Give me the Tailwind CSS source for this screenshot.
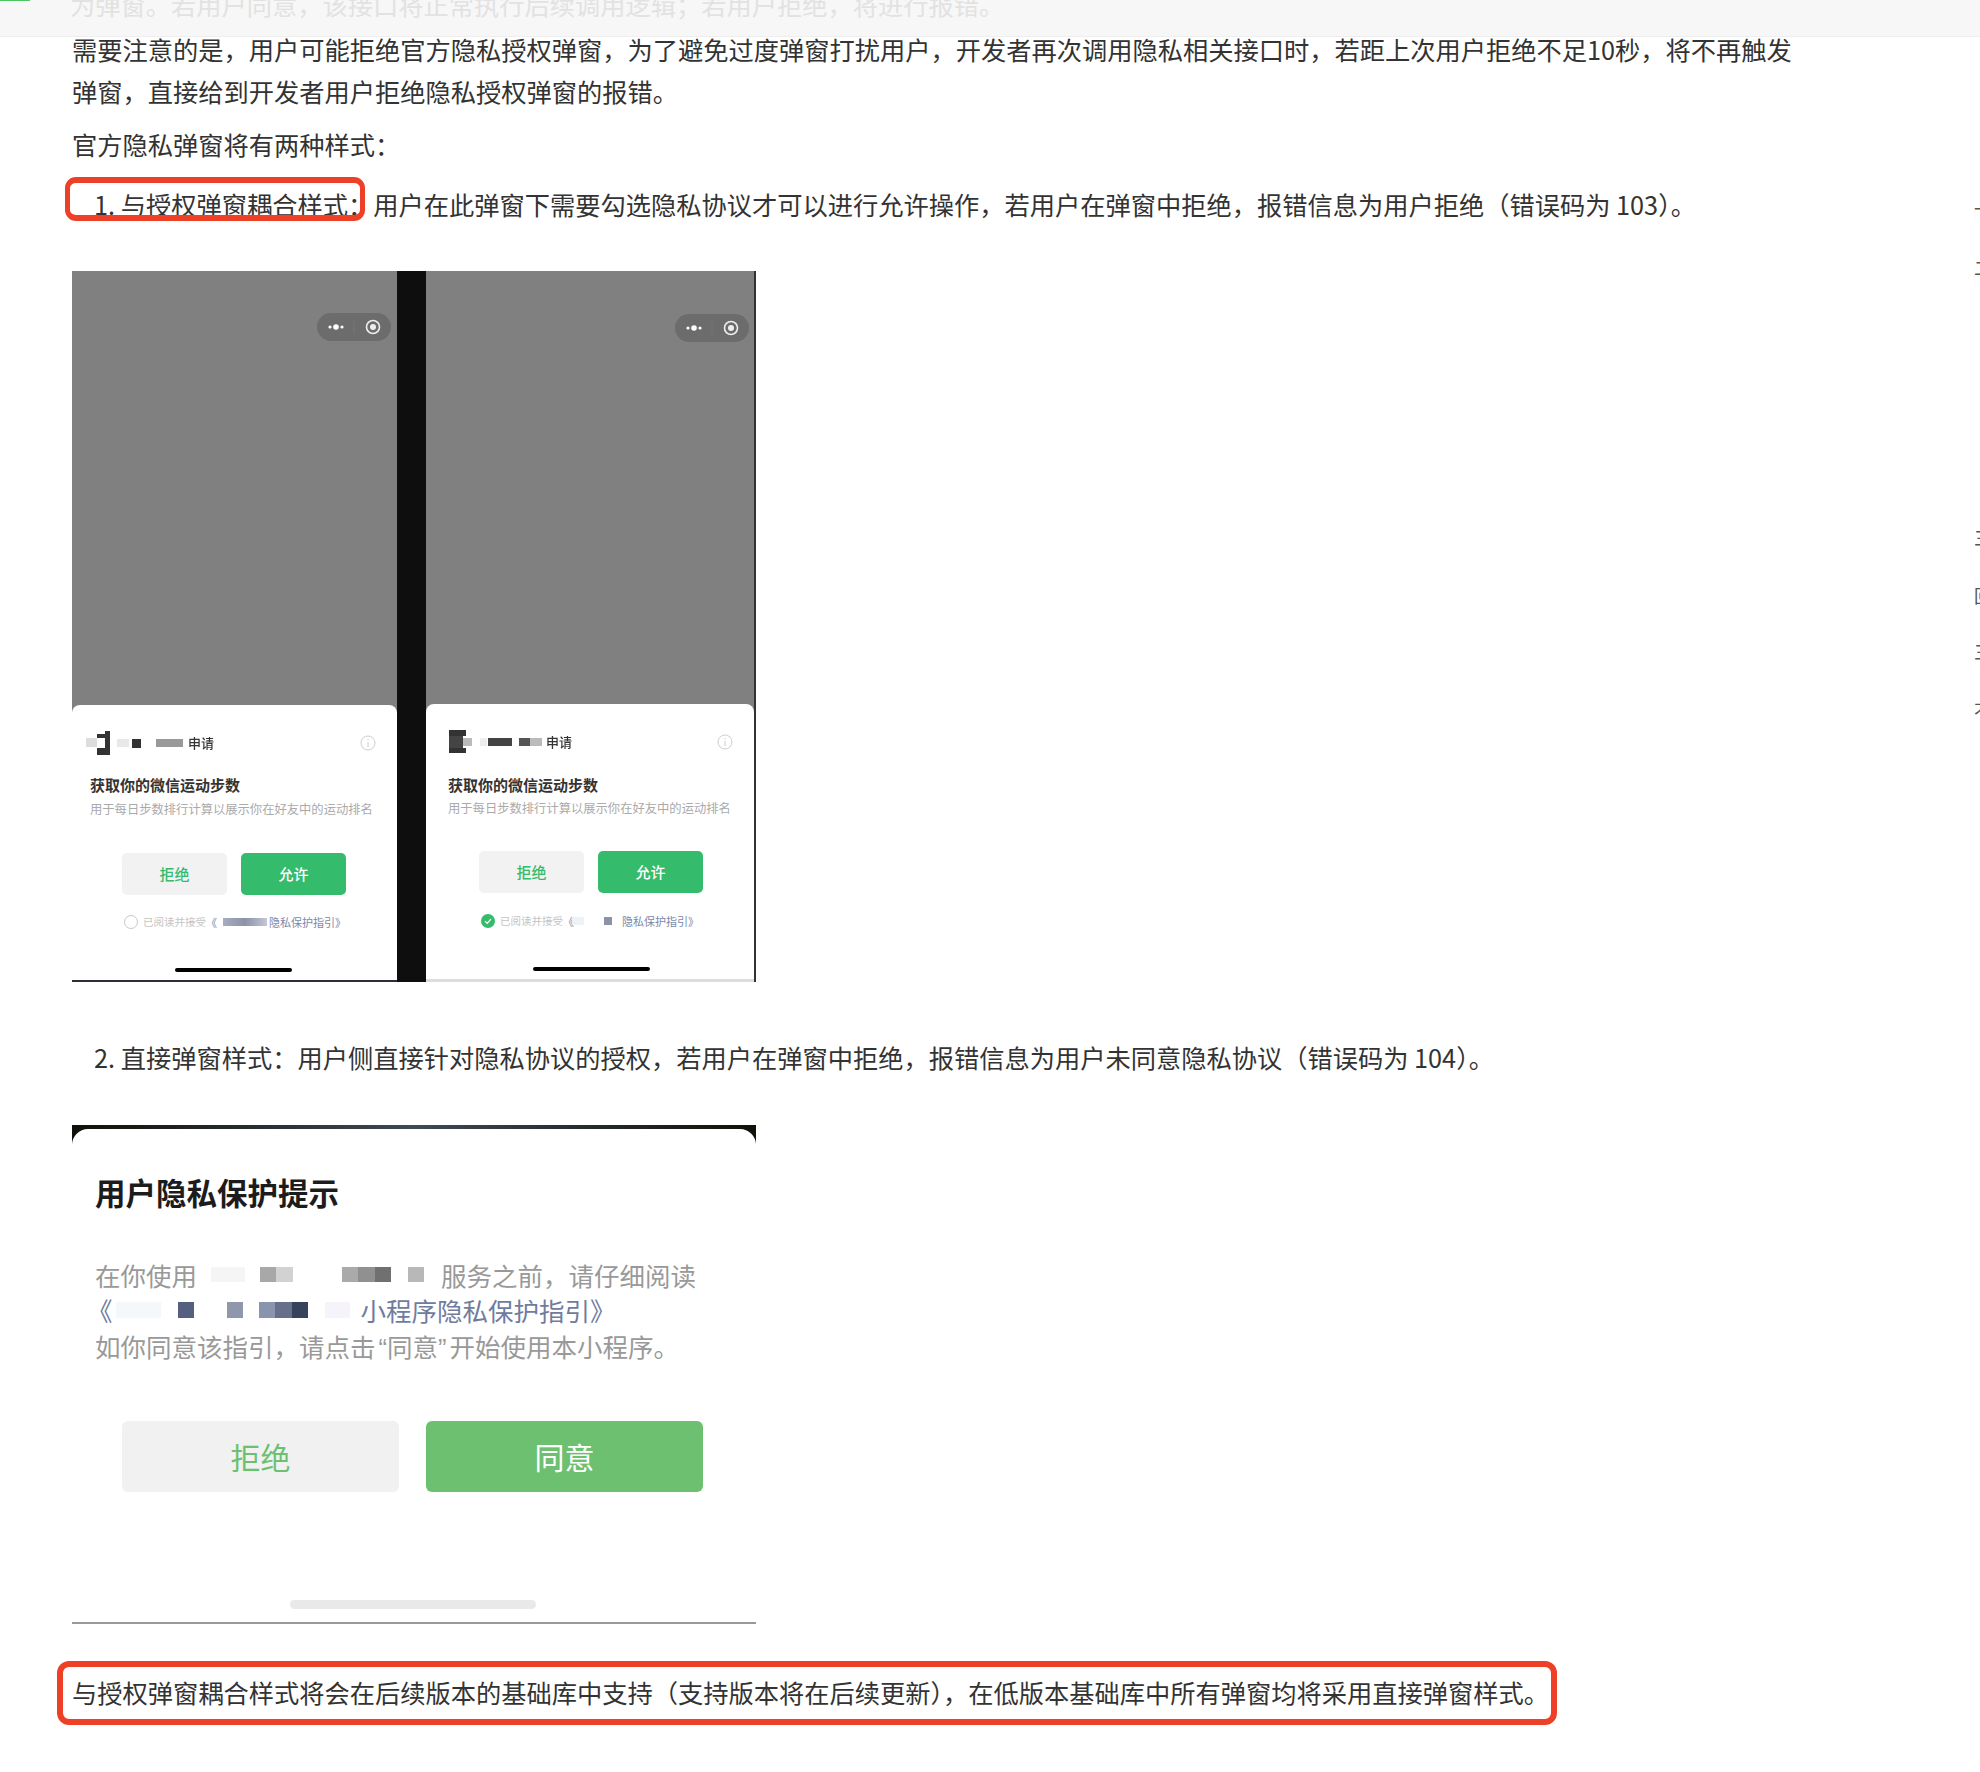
<!DOCTYPE html>
<html lang="zh-CN">
<head>
    <meta charset="UTF-8">
    <title>隐私授权弹窗</title>
    <script src="https://cdn.jsdelivr.net/npm/@tailwindcss/browser@4"></script>
</head>
<body class="bg-white">
<div class="relative flex w-[1980px] h-[1772px] overflow-hidden bg-white text-[#333] font-['Noto_Sans_CJK_SC','Noto_Sans',sans-serif]">

    <!-- 顶部吸顶栏 -->
    <header class="absolute top-0 left-0 right-0 h-[37px] overflow-hidden bg-[#f7f7f7] border-b border-[#eeeeee] z-10">
        <div class="absolute top-0 left-0 w-[30px] h-[1px] bg-[#4cc764]"></div>
        <p class="pl-[70px] -mt-[16px] text-[25.25px] leading-[41px] text-[#e2e2e2] whitespace-nowrap">为弹窗。若用户同意，该接口将正常执行后续调用逻辑；若用户拒绝，将进行报错。</p>
    </header>

    <main class="w-[1974px] shrink-0 pl-[72px] pt-[29px] text-[25.25px] leading-[41.6px]">
        <p class="w-[1730px]">需要注意的是，用户可能拒绝官方隐私授权弹窗，为了避免过度弹窗打扰用户，开发者再次调用隐私相关接口时，若距上次用户拒绝不足10秒，将不再触发弹窗，直接给到开发者用户拒绝隐私授权弹窗的报错。</p>
        <p class="mt-[12px]">官方隐私弹窗将有两种样式：</p>

        <div class="relative mt-[18px] pl-[22px] whitespace-nowrap">
            <div class="absolute -left-[7px] -top-[7px] w-[300px] h-[44px] border-x-[5px] border-y-[6px] border-[#ee4027] rounded-[11px]"></div>
            1. 与授权弹窗耦合样式：用户在此弹窗下需要勾选隐私协议才可以进行允许操作，若用户在弹窗中拒绝，报错信息为用户拒绝（错误码为 103）。
        </div>

        <!-- 图一：与授权弹窗耦合 -->
        <div class="mt-[46px] flex w-[684px] h-[711px] blur-[0.5px]">
            <div class="w-[325px] flex flex-col bg-[#808080]">
                <div class="h-[434px] flex justify-end pt-[42px] pr-[6px]">
                    <div class="w-[74px] h-[28px] rounded-full bg-[#6c6c6c] flex items-center">
                        <svg width="74" height="28" viewBox="0 0 74 28"><circle cx="13" cy="14" r="1.6" fill="#fff"/><circle cx="19" cy="14" r="2.8" fill="#fff"/><circle cx="25" cy="14" r="1.6" fill="#fff"/><path d="M37 7v14" stroke="#777"/><circle cx="56" cy="14" r="6.5" fill="none" stroke="#eee" stroke-width="1.6"/><circle cx="56" cy="14" r="3" fill="#eee"/></svg>
                    </div>
                </div>
                <div class="h-[275px] bg-white rounded-t-[8px] pl-[18px] flex flex-col">
                    <div class="mt-[26px] h-[24px] flex items-center relative">
                        <svg width="112" height="24" viewBox="0 0 112 24" class="-ml-[4px]"><rect x="0" y="7" width="11" height="9" fill="#ddd"/><rect x="11" y="7" width="8" height="10" fill="#fff"/><rect x="11" y="3" width="13" height="4" fill="#333"/><rect x="19" y="0" width="5" height="24" fill="#333"/><rect x="11" y="17" width="13" height="7" fill="#333"/><rect x="31" y="8" width="12" height="8" fill="#e8e8e8"/><rect x="46" y="8" width="9" height="9" fill="#333"/><rect x="70" y="8" width="27" height="8" fill="#999"/></svg>
                        <span class="-ml-[10px] text-[13px] leading-[24px] font-medium text-[#333]">申请</span>
                        <svg width="16" height="16" viewBox="0 0 16 16" class="absolute left-[270px] top-[4px]"><circle cx="8" cy="8" r="7" fill="none" stroke="#ccc"/><path d="M8 7v5M8 4v1.5" stroke="#ccc"/></svg>
                    </div>
                    <h3 class="mt-[20px] text-[15px] leading-[20px] font-bold text-[#333]">获取你的微信运动步数</h3>
                    <p class="mt-[5px] text-[12.3px] leading-[18px] text-[#aaaaaa] whitespace-nowrap">用于每日步数排行计算以展示你在好友中的运动排名</p>
                    <div class="mt-[35px] ml-[32px] flex gap-[14px]">
                        <div class="w-[105px] h-[42px] rounded-[5px] bg-[#f2f2f2] text-[#35bb6c] text-[15px] leading-[42px] font-medium text-center">拒绝</div>
                        <div class="w-[105px] h-[42px] rounded-[5px] bg-[#35bb6c] text-white text-[15px] leading-[42px] font-medium text-center">允许</div>
                    </div>
                    <div class="mt-[19px] ml-[34px] h-[16px] flex items-center text-[10.5px] leading-[16px] whitespace-nowrap">
                        <span class="w-[14px] h-[14px] rounded-full border border-[#c8c8c8]"></span>
                        <span class="ml-[5px] text-[#c4c4c4]">已阅读并接受</span>
                        <span class="text-[#7b88a8] text-[11px]">《</span>
                        <span class="ml-[6px] w-[44px] h-[8px] bg-gradient-to-r from-[#a8adc0] via-[#8c93a8] to-[#c4c8d6]"></span>
                        <span class="ml-[2px] text-[#7b88a8] text-[11px]">隐私保护指引》</span>
                    </div>
                    <div class="mt-[38px] ml-[85px] w-[117px] h-[4px] rounded-full bg-black"></div>
                </div>
                <div class="h-[2px] bg-[#2a2f38]"></div>
            </div>

            <div class="w-[29px] bg-[#0e0e0e]"></div>

            <div class="w-[330px] flex flex-col bg-[#808080] border-r-2 border-[#333]">
                <div class="h-[433px] flex justify-end pt-[43px] pr-[5px]">
                    <div class="w-[74px] h-[28px] rounded-full bg-[#6c6c6c] flex items-center">
                        <svg width="74" height="28" viewBox="0 0 74 28"><circle cx="13" cy="14" r="1.6" fill="#fff"/><circle cx="19" cy="14" r="2.8" fill="#fff"/><circle cx="25" cy="14" r="1.6" fill="#fff"/><path d="M37 7v14" stroke="#777"/><circle cx="56" cy="14" r="6.5" fill="none" stroke="#eee" stroke-width="1.6"/><circle cx="56" cy="14" r="3" fill="#eee"/></svg>
                    </div>
                </div>
                <div class="h-[275px] bg-white rounded-t-[8px] pl-[22px] flex flex-col">
                    <div class="mt-[26px] h-[24px] flex items-center relative">
                        <svg width="98" height="24" viewBox="0 0 98 24"><rect x="1" y="0" width="17" height="6" fill="#333"/><rect x="1" y="6" width="14" height="12" fill="#444"/><rect x="15" y="8" width="9" height="8" fill="#bbb"/><rect x="1" y="18" width="17" height="5" fill="#333"/><rect x="32" y="8" width="7" height="8" fill="#eee"/><rect x="40" y="8" width="24" height="8" fill="#444"/><rect x="71" y="8" width="11" height="8" fill="#555"/><rect x="82" y="8" width="12" height="8" fill="#bbb"/></svg>
                        <span class="text-[13px] leading-[24px] font-medium text-[#333]">申请</span>
                        <svg width="16" height="16" viewBox="0 0 16 16" class="absolute left-[269px] top-[4px]"><circle cx="8" cy="8" r="7" fill="none" stroke="#ccc"/><path d="M8 7v5M8 4v1.5" stroke="#ccc"/></svg>
                    </div>
                    <h3 class="mt-[21px] text-[15px] leading-[20px] font-bold text-[#333]">获取你的微信运动步数</h3>
                    <p class="mt-[4px] text-[12.3px] leading-[18px] text-[#aaaaaa] whitespace-nowrap">用于每日步数排行计算以展示你在好友中的运动排名</p>
                    <div class="mt-[34px] ml-[31px] flex gap-[14px]">
                        <div class="w-[105px] h-[42px] rounded-[5px] bg-[#f2f2f2] text-[#35bb6c] text-[15px] leading-[42px] font-medium text-center">拒绝</div>
                        <div class="w-[105px] h-[42px] rounded-[5px] bg-[#35bb6c] text-white text-[15px] leading-[42px] font-medium text-center">允许</div>
                    </div>
                    <div class="mt-[20px] ml-[33px] h-[16px] flex items-center text-[10.5px] leading-[16px] whitespace-nowrap">
                        <svg width="14" height="14" viewBox="0 0 14 14"><circle cx="7" cy="7" r="7" fill="#35bb6c"/><path d="M4 7.2l2.2 2.2L10 5" fill="none" stroke="#fff" stroke-width="1.2"/></svg>
                        <span class="ml-[5px] text-[#c4c4c4]">已阅读并接受</span>
                        <span class="text-[#7b88a8] text-[11px]">《</span>
                        <span class="-ml-[2px] w-[12px] h-[8px] bg-[#eef1f6]"></span>
                        <span class="ml-[20px] w-[8px] h-[8px] bg-[#8c93a8]"></span>
                        <span class="ml-[10px] text-[#7b88a8] text-[11px]">隐私保护指引》</span>
                    </div>
                    <div class="mt-[38px] ml-[85px] w-[117px] h-[4px] rounded-full bg-black"></div>
                </div>
                <div class="h-[3px] bg-[#dddddd]"></div>
            </div>
        </div>

        <div class="mt-[55px] pl-[22px] whitespace-nowrap">2. 直接弹窗样式：用户侧直接针对隐私协议的授权，若用户在弹窗中拒绝，报错信息为用户未同意隐私协议（错误码为 104）。</div>

        <!-- 图二：直接弹窗 -->
        <div class="mt-[46px] w-[684px] h-[500px] flex flex-col bg-gradient-to-r from-[#11110a] via-[#3f4a55] to-[#11110a]">
            <div class="mt-[4px] h-[496px] bg-white rounded-t-[16px] flex flex-col">
                <h2 class="mt-[43px] pl-[23px] text-[30.5px] leading-[40px] font-bold text-[#1c1c1c]">用户隐私保护提示</h2>
                <div class="mt-[45px] pl-[23px] text-[25.5px] leading-[35.5px] text-[#999999]">
                    <div class="flex items-center h-[35.5px] whitespace-nowrap">
                        <span>在你使用</span>
                        <span class="ml-[14px] w-[34px] h-[15px] bg-[#f5f5f5]"></span>
                        <span class="ml-[15px] w-[16px] h-[15px] bg-[#a8a8a8]"></span>
                        <span class="w-[17px] h-[15px] bg-[#d2d2d2]"></span>
                        <span class="ml-[49px] w-[16px] h-[15px] bg-[#aaaaaa]"></span>
                        <span class="w-[17px] h-[15px] bg-[#909090]"></span>
                        <span class="w-[16px] h-[15px] bg-[#707070]"></span>
                        <span class="ml-[17px] w-[16px] h-[15px] bg-[#b8b8b8]"></span>
                        <span class="ml-[17px]">服务之前，请仔细阅读</span>
                    </div>
                    <div class="flex items-center h-[35.5px] whitespace-nowrap text-[#6f7c9d]">
                        <span class="-ml-[8px] w-[25.5px]">《</span>
                        <span class="ml-[3px] w-[45px] h-[16px] bg-[#f5f8fb]"></span>
                        <span class="ml-[17px] w-[16px] h-[16px] bg-[#556080]"></span>
                        <span class="ml-[33px] w-[16px] h-[16px] bg-[#9097ad]"></span>
                        <span class="ml-[16px] w-[16px] h-[16px] bg-[#8a94ad]"></span>
                        <span class="w-[17px] h-[16px] bg-[#67708a]"></span>
                        <span class="w-[16px] h-[16px] bg-[#36435a]"></span>
                        <span class="ml-[17px] w-[25px] h-[16px] bg-[#f6f3fb]"></span>
                        <span class="ml-[11px]">小程序隐私保护指引》</span>
                    </div>
                    <div class="h-[35.5px] whitespace-nowrap">如你同意该指引，请点击<span class="ml-[3px] font-['Liberation_Sans']">“</span>同意<span class="mr-[3px] font-['Liberation_Sans']">”</span>开始使用本小程序。</div>
                </div>
                <div class="mt-[58px] ml-[50px] flex gap-[27px]">
                    <div class="w-[277px] h-[71px] rounded-[6px] bg-[#f1f1f1] text-[#6cc070] text-[30px] leading-[71px] text-center">拒绝</div>
                    <div class="w-[277px] h-[71px] rounded-[6px] bg-[#6cc070] text-white text-[30px] leading-[71px] text-center">同意</div>
                </div>
                <div class="mt-[108px] ml-[218px] w-[246px] h-[9px] rounded-full bg-[#e9e9e9]"></div>
                <div class="mt-[13px] h-[2px] bg-[#999999]"></div>
            </div>
        </div>

        <div class="relative mt-[47px] whitespace-nowrap">
            <div class="absolute -left-[15px] -top-[11px] w-[1500px] h-[64px] border-[6px] border-[#ee4027] rounded-[12px]"></div>
            与授权弹窗耦合样式将会在后续版本的基础库中支持（支持版本将在后续更新），在低版本基础库中所有弹窗均将采用直接弹窗样式。
        </div>
    </main>

    <!-- 右侧目录，被窗口裁切 -->
    <aside class="w-[6px] overflow-hidden pt-[196px] text-[18px] leading-[24px] text-[#555] whitespace-nowrap">
        <div class="h-[24px]">一</div>
        <div class="mt-[35px] h-[24px]">二</div>
        <div class="mt-[246px] h-[24px]">三</div>
        <div class="mt-[34px] h-[24px]">回</div>
        <div class="mt-[32px] h-[24px]">三</div>
        <div class="mt-[35px] h-[24px]">不</div>
    </aside>
</div>
</body>
</html>
